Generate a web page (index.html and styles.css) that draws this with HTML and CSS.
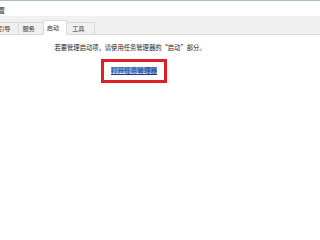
FILE: index.html
```html
<!DOCTYPE html>
<html lang="zh-CN">
<head>
<meta charset="utf-8">
<link rel="stylesheet" href="styles.css">
</head>
<body>
<div class="window">
  <div class="titlebar"><span class="title">系统配置</span></div>
  <div class="tabstrip">
    <div class="tabs">
      <div class="tab first">引导</div>
      <div class="tab">服务</div>
      <div class="tab active">启动</div>
      <div class="tab last">工具</div>
    </div>
  </div>
  <div class="content">
    <p class="msg">若要管理启动项，请使用任务管理器的“启动”部分。</p>
    <div class="highlight-box"><a class="link" href="#">打开任务管理器</a></div>
  </div>
</div>
</body>
</html>
```
FILE: styles.css
```css
html, body {
  margin: 0;
  padding: 0;
  background: #ffffff;
}
body {
  font-family: "Noto Sans CJK SC", "Noto Sans", sans-serif;
  color: #1e1e1e;
  overflow: hidden;
}
.window {
  width: 100%;
  min-height: 215px;
  overflow: hidden;
  border-top: 1px solid #a9bccf;
}
.titlebar {
  height: 15px;
  box-sizing: border-box;
  padding-top: 5px;
  overflow: hidden;
  white-space: nowrap;
  font-size: 7px;
  line-height: 8px;
  background: #ffffff;
}
.title {
  margin-left: -23px;
  color: #333;
}
.tabstrip {
  height: 18px;
  background: #f0f0f0;
  display: flex;
  align-items: flex-end;
  border-bottom: 1px solid #dadada;
}
.tabs {
  display: flex;
  align-items: flex-end;
  margin-left: -6px;
  margin-bottom: -1px;
}
.tab {
  height: 13px;
  box-sizing: border-box;
  border: 1px solid #d9d9d9;
  border-right: none;
  background: #f0f0f0;
  padding: 0 8px 0 3px;
  font-size: 6.2px;
  line-height: 11px;
  color: #333;
  white-space: nowrap;
}
.tab.active {
  height: 15px;
  line-height: 13px;
  background: #ffffff;
  border-right: 1px solid #d9d9d9;
  border-bottom: 1px solid #ffffff;
  padding: 0 7px 0 3px;
}
.tab.active + .tab {
  border-left: none;
  padding-left: 5px;
}
.tab.last {
  border-right: 1px solid #d9d9d9;
  padding-right: 9px;
}
.content {
  width: 266px;
  display: flex;
  flex-direction: column;
  align-items: center;
}
.msg {
  margin: 9px 0 0 -6px;
  font-size: 6.3px;
  line-height: 7px;
  color: #222;
  white-space: nowrap;
}
.highlight-box {
  margin-top: 8px;
  margin-left: 2px;
  border: 3px solid #dd1f26;
  padding: 5px 7px 7px 7px;
  line-height: 6px;
  font-size: 6.6px;
}
.link {
  display: block;
  font-size: 6.6px;
  line-height: 6px;
  height: 6px;
  background: #7ba6dc;
  color: #173d8c;
  text-decoration: underline;
  white-space: nowrap;
}
```
